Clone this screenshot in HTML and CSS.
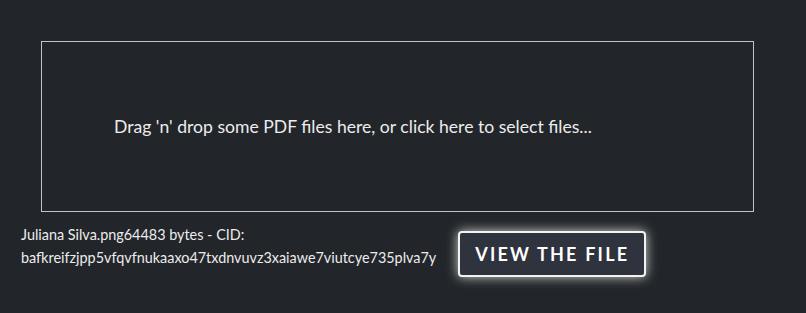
FILE: index.html
```html
<!DOCTYPE html>
<html lang="en">
<head>
  <meta charset="UTF-8" />
  <meta name="viewport" content="width=device-width, initial-scale=1.0" />
  <title>Upload PDF</title>
  <link rel="stylesheet" href="styles.css">
</head>
<body>
  <div class="page">
    <div class="dropzone">
      <p>Drag 'n' drop some PDF files here, or click here to select files...</p>
    </div>
    <div class="result">
      <div class="file-info">
        <div>Juliana Silva.png64483 bytes - CID:</div>
        <div>bafkreifzjpp5vfqvfnukaaxo47txdnvuvz3xaiawe7viutcye735plva7y</div>
      </div>
      <button class="view-btn">View the file</button>
    </div>
  </div>
</body>
</html>
```

FILE: styles.css
```css
:root {
  --bg: #222529;
  --text: #ececec;
  --btn-bg: #2e333d;
}
* { box-sizing: border-box; margin: 0; padding: 0; }
html, body { height: 100%; }
body {
  background: var(--bg);
  color: var(--text);
  font-family: Lato, 'Open Sans', sans-serif;
}
.page { padding-top: 41px; }
.dropzone {
  margin: 0 52px 0 41px;
  height: 171px;
  border: 1px solid #c0c3c7;
  display: flex;
  align-items: center;
  padding-left: 72px;
  cursor: pointer;
}
.dropzone p {
  font-size: 17.6px;
  margin-top: -1px;
}
.result {
  display: flex;
  align-items: flex-start;
  gap: 22px;
  padding: 11px 0 0 21px;
}
.file-info {
  font-size: 14.4px;
  line-height: 23px;
}
.view-btn {
  margin-top: 8px;
  width: 188px;
  height: 46px;
  background: var(--btn-bg);
  color: #fff;
  border: 2px solid #f2f2f2;
  border-radius: 4px;
  box-shadow: 0 0 12px rgba(255,255,255,0.8);
  font-family: Lato, sans-serif;
  font-weight: 700;
  font-size: 18px;
  letter-spacing: 2.2px;
  text-transform: uppercase;
  cursor: pointer;
}
```
